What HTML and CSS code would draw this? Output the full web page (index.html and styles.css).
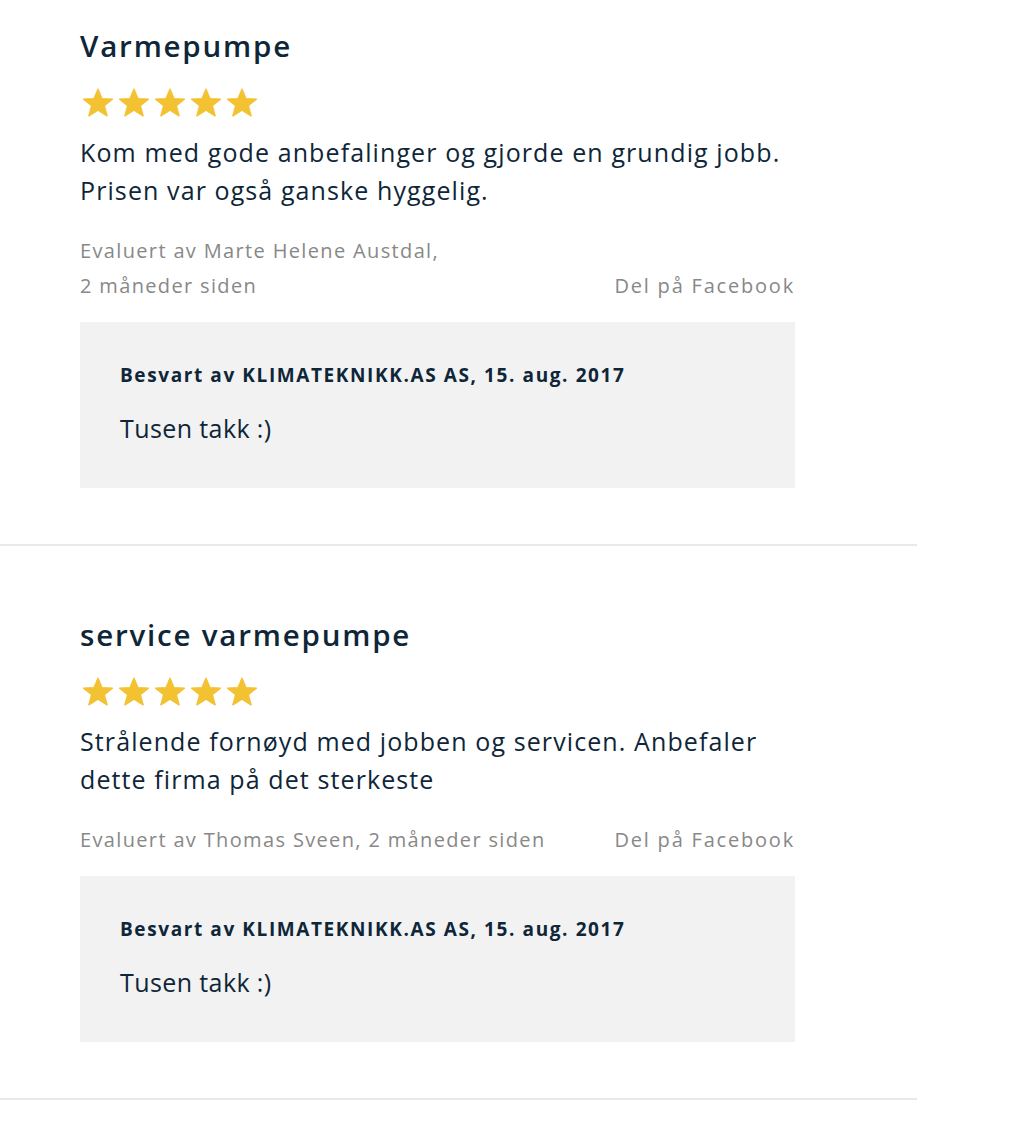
FILE: index.html
```html
<!DOCTYPE html>
<html lang="no">
<head>
<meta charset="utf-8">
<title>Evalueringer</title>
<link rel="stylesheet" href="styles.css">
</head>
<body>
<svg width="0" height="0" class="defs" aria-hidden="true">
  <defs>
    <symbol id="star" viewBox="0 0 32 30">
      <path d="M16 1.2 L19.9 10.6 L30.4 11.1 L22.3 17.6 L25.1 27.8 L16 22.1 L6.9 27.8 L9.7 17.6 L1.6 11.1 L12.1 10.6 Z" fill="#f3c233" stroke="#f3c233" stroke-width="1.4" stroke-linejoin="round"/>
    </symbol>
  </defs>
</svg>
<main class="reviews">
  <article class="review review-first">
    <h2 class="review-title">Varmepumpe</h2>
    <div class="stars">
      <svg class="star"><use href="#star"/></svg>
      <svg class="star"><use href="#star"/></svg>
      <svg class="star"><use href="#star"/></svg>
      <svg class="star"><use href="#star"/></svg>
      <svg class="star"><use href="#star"/></svg>
    </div>
    <p class="review-text">Kom med gode anbefalinger og gjorde en grundig jobb. Prisen var også ganske hyggelig.</p>
    <div class="meta">
      <span class="author author-narrow">Evaluert av Marte Helene Austdal, 2 måneder siden</span>
      <a class="share" href="#">Del på Facebook</a>
    </div>
    <div class="reply">
      <div class="reply-head">Besvart av KLIMATEKNIKK.AS AS, 15. aug. 2017</div>
      <div class="reply-text">Tusen takk :)</div>
    </div>
  </article>
  <article class="review">
    <h2 class="review-title">service varmepumpe</h2>
    <div class="stars">
      <svg class="star"><use href="#star"/></svg>
      <svg class="star"><use href="#star"/></svg>
      <svg class="star"><use href="#star"/></svg>
      <svg class="star"><use href="#star"/></svg>
      <svg class="star"><use href="#star"/></svg>
    </div>
    <p class="review-text">Strålende fornøyd med jobben og servicen. Anbefaler dette firma på det sterkeste</p>
    <div class="meta">
      <span class="author">Evaluert av Thomas Sveen, 2 måneder siden</span>
      <a class="share" href="#">Del på Facebook</a>
    </div>
    <div class="reply">
      <div class="reply-head">Besvart av KLIMATEKNIKK.AS AS, 15. aug. 2017</div>
      <div class="reply-text">Tusen takk :)</div>
    </div>
  </article>
</main>
</body>
</html>
```

FILE: styles.css
```css
* { box-sizing: border-box; }

html, body {
  margin: 0;
  padding: 0;
  background: #ffffff;
}

body {
  font-family: "Open Sans", "Liberation Sans", sans-serif;
  color: #0e2638;
}

.defs {
  position: absolute;
  width: 0;
  height: 0;
  overflow: hidden;
}

.reviews {
  width: 917px;
}

.review {
  display: flex;
  flex-direction: column;
  padding: 69px 122px 56px 80px;
  border-bottom: 2px solid #e9e9e9;
}

.review-first {
  padding-top: 26px;
}

.review-title {
  margin: 0;
  font-size: 29.5px;
  line-height: 40px;
  font-weight: 600;
  letter-spacing: 1.8px;
  color: #0e2638;
}

.stars {
  display: flex;
  gap: 4px;
  margin-top: 22px;
  margin-left: 2px;
}

.star {
  width: 32px;
  height: 30px;
}

.review-text {
  margin: 15px 0 0;
  font-size: 25px;
  line-height: 38px;
  letter-spacing: 1.1px;
}

.meta {
  display: flex;
  justify-content: space-between;
  align-items: flex-end;
  margin-top: 24px;
  font-size: 20px;
  line-height: 35px;
  letter-spacing: 1.35px;
  color: #888888;
}

.author-narrow {
  width: 370px;
}

.share {
  color: #888888;
  text-decoration: none;
  letter-spacing: 1.8px;
}

.reply {
  margin-top: 19px;
  background: #f2f2f2;
  padding: 40px 40px 42px;
  height: 166px;
}

.reply-head {
  font-size: 19px;
  line-height: 26px;
  font-weight: 700;
  letter-spacing: 1.6px;
}

.reply-text {
  margin-top: 22px;
  font-size: 25px;
  line-height: 36px;
  letter-spacing: 0.4px;
}
```
